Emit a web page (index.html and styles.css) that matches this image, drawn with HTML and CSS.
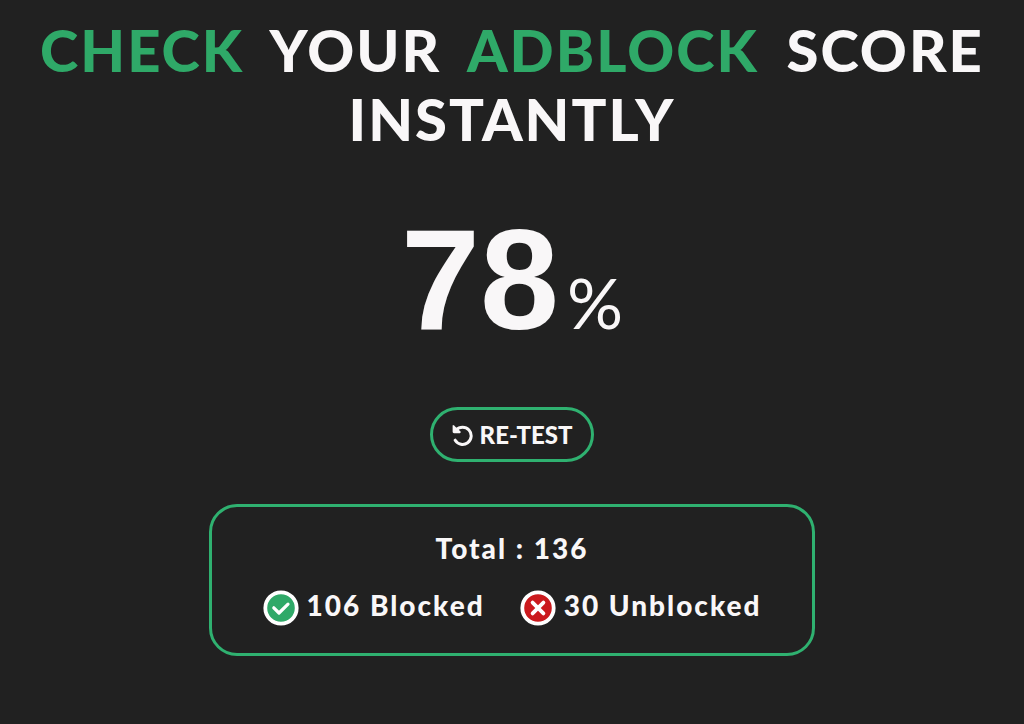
FILE: index.html
```html
<!DOCTYPE html>
<html lang="en">
<head>
    <meta charset="UTF-8" />
    <meta name="viewport" content="width=device-width, initial-scale=1.0" />
    <title>Adblock Score</title>
    <link rel="stylesheet" href="styles.css">
</head>
<body>
    <main class="container">
        <h1 class="title">
            <span class="green">Check</span>
            <span>Your</span>
            <span class="green">Adblock</span>
            <span>Score</span>
            <span>Instantly</span>
        </h1>
        <div class="score">
            <span class="score-number">78</span>
            <span class="score-percent">%</span>
        </div>
        <button type="button" class="retest">
            <svg class="retest-icon" viewBox="0 0 22 22" aria-hidden="true">
                <path d="M4.2 6A8.6 8.6 0 1 1 3.2 16.2" fill="none" stroke="currentColor" stroke-width="3" stroke-linecap="round" />
                <path d="M.6 2Q.6 .4 2 1.4L8.6 7.6Q9.2 9 7.8 9.2H2Q.6 9.2 .6 7.8Z" fill="currentColor" />
            </svg>
            Re-test
        </button>
        <section class="results">
            <p class="total">Total : 136</p>
            <div class="counts">
                <div class="count">
                    <svg class="count-icon" viewBox="0 0 36 36" aria-hidden="true">
                        <circle cx="18" cy="18" r="15.7" fill="#2fa968" stroke="#fff" stroke-width="3.8" />
                        <path d="M10.8 17.8L16 23L25 14.2" fill="none" stroke="#fff" stroke-width="3.2" stroke-linecap="round" stroke-linejoin="round" />
                    </svg>
                    <span>106 Blocked</span>
                </div>
                <div class="count">
                    <svg class="count-icon" viewBox="0 0 36 36" aria-hidden="true">
                        <circle cx="18" cy="18" r="15.7" fill="#cb1a1e" stroke="#fff" stroke-width="3.8" />
                        <path d="M12.6 12.6L23.4 23.4M23.4 12.6L12.6 23.4" fill="none" stroke="#fff" stroke-width="3.8" stroke-linecap="round" />
                    </svg>
                    <span>30 Unblocked</span>
                </div>
            </div>
        </section>
    </main>
</body>
</html>
```
FILE: styles.css
```css
* {
    box-sizing: border-box;
}
body {
    margin: 0;
    background: #212121;
    color: #f9f7f8;
    font-family: Lato, "Open Sans", sans-serif;
}
.container {
    display: flex;
    flex-direction: column;
    align-items: center;
    padding: 15px 16px 48px;
}
.title {
    margin: 0;
    font-size: 58px;
    font-weight: 900;
    line-height: 69px;
    letter-spacing: 2px;
    word-spacing: 12px;
    text-align: center;
    text-transform: uppercase;
}
.green {
    color: #2fa968;
}
.score {
    display: flex;
    align-items: baseline;
    gap: 8px;
    margin-top: 57px;
    line-height: 140px;
}
.score-number {
    font-family: "Liberation Sans", Arial, sans-serif;
    font-size: 142px;
    font-weight: bold;
}
.score-percent {
    font-size: 70px;
    font-weight: 400;
}
.retest {
    display: flex;
    align-items: center;
    gap: 6px;
    height: 55px;
    margin-top: 35px;
    padding: 0 19px;
    background: transparent;
    border: 3px solid #2fb170;
    border-radius: 28px;
    color: inherit;
    font-family: inherit;
    font-size: 24px;
    font-weight: 900;
    text-transform: uppercase;
    cursor: pointer;
}
.retest-icon {
    width: 22px;
    height: 22px;
}
.results {
    width: 606px;
    max-width: 100%;
    margin-top: 42px;
    padding: 23px 24px 27px;
    border: 3px solid #2fb170;
    border-radius: 28px;
    font-size: 28px;
    font-weight: 900;
    line-height: 36px;
    letter-spacing: 2px;
    text-align: center;
}
.total {
    margin: 0 0 21px;
}
.counts {
    display: flex;
    flex-wrap: wrap;
    justify-content: center;
    gap: 35px;
}
.count {
    display: flex;
    align-items: flex-start;
    gap: 8px;
}
.count-icon {
    width: 36px;
    height: 36px;
    margin-top: 3px;
}
```
